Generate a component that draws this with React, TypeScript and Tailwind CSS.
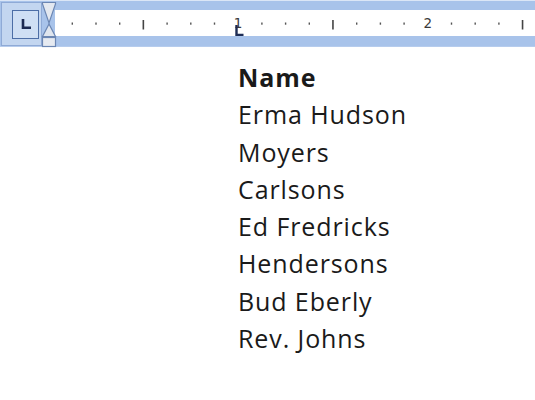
import React from "react";

const names = ["Erma Hudson", "Moyers", "Carlsons", "Ed Fredricks", "Hendersons", "Bud Eberly", "Rev. Johns"];

function Ticks() {
  const items: React.ReactNode[] = [];
  for (let k = 1; k <= 21; k++) {
    const x = 48.5 + 23.7 * k - 55;
    if (k === 8 || k === 16) {
      items.push(
        <text key={k} x={x} y={17.5} textAnchor="middle" fontSize="13.5" fontFamily="'DejaVu Sans', sans-serif" fill="#3a3a3a">
          {k === 8 ? "1" : "2"}
        </text>
      );
    } else if (k % 4 === 0) {
      items.push(<rect key={k} x={x - 0.75} y={10} width={1.6} height={9.5} fill="#444" />);
    } else {
      items.push(<rect key={k} x={x - 0.6} y={12.5} width={1.4} height={2.2} fill="#555" />);
    }
  }
  return (
    <svg width="480" height="26" className="block">
      {items}
      {/* left tab marker */}
      <path d="M181.5 15 V25 H188.5" stroke="#1e2d55" strokeWidth="2.4" fill="none" />
    </svg>
  );
}

export default function App() {
  return (
    <div className="w-[535px] h-[400px] bg-white overflow-hidden" style={{ fontFamily: "'Open Sans', 'Noto Sans', sans-serif" }}>
      <div className="relative h-[47px] bg-[#a8c3ea] border-t border-[#dbe6f6] border-b border-b-[#b6cced]">
        <div className="absolute left-[55px] right-0 top-[9px] h-[26px] bg-white">
          <Ticks />
        </div>
        {/* tab selector */}
        <div className="absolute left-[1px] top-[1px] w-[41px] h-[44px] bg-[#c3d6f0] border border-[#8faad6] flex items-center justify-end pr-[2px]">
          <div className="w-[27px] h-[29px] bg-[#cfdff4] border border-[#4d6ea6] flex items-center justify-center">
            <svg width="14" height="14">
              <path d="M4 2 V10.8 H12" stroke="#1c2a52" strokeWidth="2.6" fill="none" />
            </svg>
          </div>
        </div>
        {/* indent markers */}
        <svg className="absolute left-[41px] top-0" width="16" height="47">
          <path d="M1.5 1.5 H14.5 V3 L8 22 L1.5 3 Z" fill="#e3e8f0" stroke="#6b86b3" strokeWidth="1.2" />
          <path d="M8 23 L14.5 35.5 H1.5 Z" fill="#dfe5ee" stroke="#6b86b3" strokeWidth="1.2" />
          <rect x="1.5" y="36.5" width="13" height="9" fill="#e6eaf1" stroke="#6b86b3" strokeWidth="1.2" />
        </svg>
      </div>
      <div className="pl-[238px] pt-[12px] text-[25px] leading-[37.3px] tracking-[0.9px] text-[#1a1a1a]">
        <div className="font-bold">Name</div>
        {names.map((n) => (
          <div key={n}>{n}</div>
        ))}
      </div>
    </div>
  );
}
